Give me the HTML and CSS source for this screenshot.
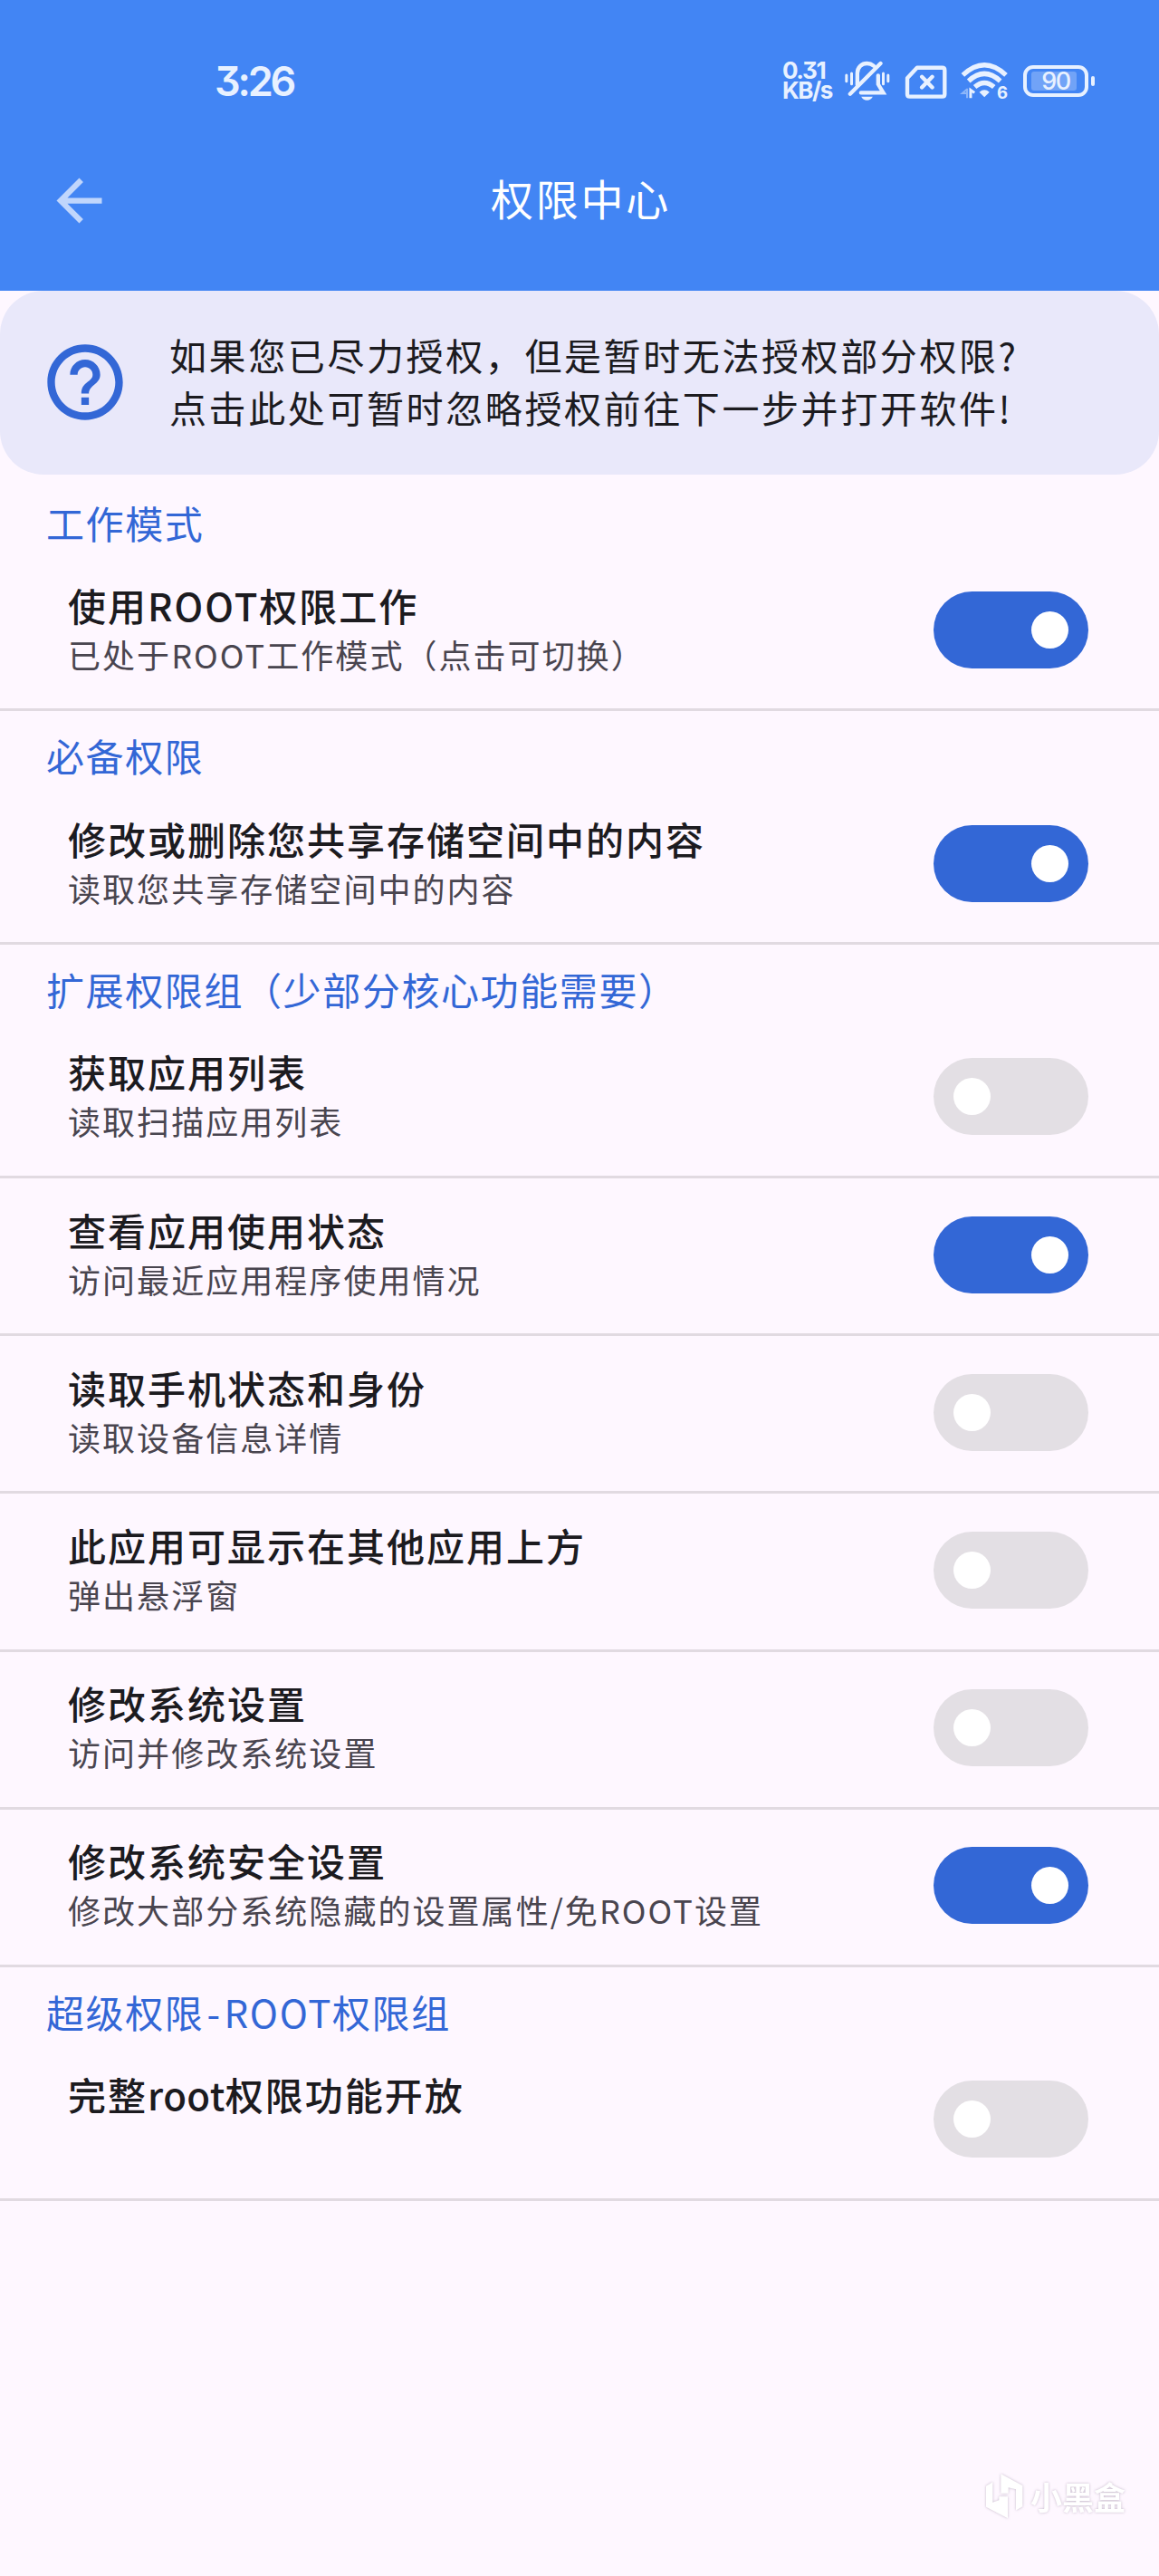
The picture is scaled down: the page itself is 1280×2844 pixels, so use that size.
FILE: index.html
```html
<!DOCTYPE html>
<html lang="zh-CN">
<head>
    <meta charset="UTF-8">
    <title>权限中心</title>
    <link rel="stylesheet" href="styles.css">
</head>
<body>
    <header class="header">
        <div class="status-bar">
            <span class="time">3:26</span>
            <div class="status-icons">
                <div class="speed"><span>0.31</span><span>KB/s</span></div>
                <!-- muted bell -->
                <svg class="icon-bell" viewBox="275 50 155 135" fill="none" stroke="currentColor" stroke-width="13" stroke-linecap="round">
                    <path d="M319 131V92C319 71 334 59 351 59C360 59 367 62 373 67M295 160L396 59M388 99V128L405 156H331"/>
                    <path d="M283 98V118M300 92V127M405 92V127M421 98V118" stroke-width="9"/>
                    <path d="M332 169H370C366 177 359 181 351 181S336 177 332 169Z" fill="currentColor" stroke="none"/>
                </svg>
                <!-- no sim -->
                <svg class="icon-sim" viewBox="478 65 140 110" fill="none" stroke="currentColor" stroke-width="13" stroke-linejoin="round">
                    <path d="M519 73H602Q610 73 610 81V160Q610 168 602 168H495Q487 168 487 160V107Z"/>
                    <path d="M535 103L569 138M569 103L535 138" stroke-linecap="round"/>
                </svg>
                <!-- wifi 6 -->
                <svg class="icon-wifi" viewBox="664 55 160 130" fill="none" stroke="currentColor" stroke-width="16">
                    <path d="M671 100Q743 33 815 100M690 120Q743 71 796 120M711 140Q743 112 775 140"/>
                    <path d="M743 174L726 157Q743 142 760 157Z" fill="currentColor" stroke="none"/>
                    <path d="M685 145V177M685 147L669 161H685" stroke-width="6" opacity=".45"/>
                    <path d="M697 177V150L710 159" stroke-width="9"/>
                    <text x="785" y="180" class="wifi-gen">6</text>
                </svg>
                <div class="battery"><span class="battery-level"></span><span class="battery-text">90</span></div>
            </div>
        </div>
        <div class="toolbar">
            <svg class="back" viewBox="0 0 24 24" fill="currentColor"><path d="M20 11H7.83l5.59-5.59L12 4l-8 8 8 8 1.41-1.41L7.83 13H20v-2z"/></svg>
            <h1>权限中心</h1>
        </div>
    </header>

    <div class="tip">
        <svg class="tip-icon" viewBox="0 0 24 24" fill="currentColor"><path d="M11 18h2v-2h-2v2zm1-16C6.48 2 2 6.48 2 12s4.48 10 10 10 10-4.48 10-10S17.52 2 12 2zm0 18c-4.41 0-8-3.59-8-8s3.59-8 8-8 8 3.59 8 8-3.59 8-8 8zm0-14c-2.21 0-4 1.79-4 4h2c0-1.1.9-2 2-2s2 .9 2 2c0 2-3 1.75-3 5h2c0-2.25 3-2.5 3-5 0-2.21-1.79-4-4-4z"/></svg>
        <p>如果您已尽力授权，但是暂时无法授权部分权限?<br>点击此处可暂时忽略授权前往下一步并打开软件!</p>
    </div>

    <main class="list">
        <h2>工作模式</h2>
        <div class="item">
            <div class="item-text">
                <h3>使用ROOT权限工作</h3>
                <p>已处于ROOT工作模式（点击可切换）</p>
            </div>
            <span class="switch on"></span>
        </div>

        <h2>必备权限</h2>
        <div class="item">
            <div class="item-text">
                <h3>修改或删除您共享存储空间中的内容</h3>
                <p>读取您共享存储空间中的内容</p>
            </div>
            <span class="switch on"></span>
        </div>

        <h2>扩展权限组（少部分核心功能需要）</h2>
        <div class="item">
            <div class="item-text">
                <h3>获取应用列表</h3>
                <p>读取扫描应用列表</p>
            </div>
            <span class="switch"></span>
        </div>
        <div class="item">
            <div class="item-text">
                <h3>查看应用使用状态</h3>
                <p>访问最近应用程序使用情况</p>
            </div>
            <span class="switch on"></span>
        </div>
        <div class="item">
            <div class="item-text">
                <h3>读取手机状态和身份</h3>
                <p>读取设备信息详情</p>
            </div>
            <span class="switch"></span>
        </div>
        <div class="item">
            <div class="item-text">
                <h3>此应用可显示在其他应用上方</h3>
                <p>弹出悬浮窗</p>
            </div>
            <span class="switch"></span>
        </div>
        <div class="item">
            <div class="item-text">
                <h3>修改系统设置</h3>
                <p>访问并修改系统设置</p>
            </div>
            <span class="switch"></span>
        </div>
        <div class="item">
            <div class="item-text">
                <h3>修改系统安全设置</h3>
                <p>修改大部分系统隐藏的设置属性/免ROOT设置</p>
            </div>
            <span class="switch on"></span>
        </div>

        <h2>超级权限<span class="dash">-</span>ROOT权限组</h2>
        <div class="item">
            <div class="item-text">
                <h3>完整<span class="latin">root</span>权限功能开放</h3>
                <p></p>
            </div>
            <span class="switch"></span>
        </div>
    </main>

    <div class="watermark">
        <svg viewBox="82 88 132 158" fill="currentColor">
            <path d="M88 135L110 121V189L131 181V169H160V241L88 204Z"/>
            <path d="M137 94L209 133V202L187 215V145L162 139V159H137Z"/>
        </svg>
        <span>小黑盒</span>
    </div>
</body>
</html>
```
FILE: styles.css
```css
* {
    box-sizing: border-box;
}
body {
    margin: 0;
    height: 2844px;
    position: relative;
    background: #fef7ff;
    color: #1c1b1f;
    font-family: "Noto Sans CJK SC", sans-serif;
}
h1, h2, h3, p {
    margin: 0;
    font-weight: 400;
}
svg {
    display: block;
    flex: none;
}

/* header */
.header {
    height: 321px;
    background: #4285f4;
    color: #fff;
}
.status-bar {
    height: 121px;
    padding: 57px 70px 0 237px;
    display: flex;
    justify-content: space-between;
    align-items: flex-start;
    color: #e8f1ff;
}
.time {
    font: 600 45px/66px Inter, sans-serif;
    font-feature-settings: "cv09";
    letter-spacing: -3.2px;
}
.status-icons {
    height: 64px;
    display: flex;
    align-items: center;
}
.speed {
    display: flex;
    flex-direction: column;
    width: 56px;
    margin-right: 12px;
    font: 700 26px/22px Inter, sans-serif;
    font-feature-settings: "cv09";
    letter-spacing: -1.4px;
    white-space: nowrap;
}
.icon-bell {
    width: 52px;
    height: 45px;
    margin-right: 15px;
}
.icon-sim {
    width: 47px;
    height: 37px;
    margin: 2px 15px 0 0;
}
.icon-wifi {
    width: 53px;
    height: 43px;
    margin-right: 16px;
    overflow: visible;
}
.wifi-gen {
    font: 700 56px Inter, sans-serif;
    fill: currentColor;
    stroke: none;
}
.battery {
    position: relative;
    width: 72px;
    height: 35px;
    margin-right: 8px;
    border: 4px solid currentColor;
    border-radius: 11px;
}
.battery::after {
    content: "";
    position: absolute;
    right: -11px;
    top: 8px;
    width: 4px;
    height: 11px;
    border-radius: 2px;
    background: currentColor;
}
.battery-level {
    position: absolute;
    left: 5px;
    top: 3px;
    width: 50px;
    height: 21px;
    border-radius: 3px;
    background: rgba(255, 255, 255, 0.25);
}
.battery-text {
    position: absolute;
    inset: 0;
    font: 500 27px/28px Inter, sans-serif;
    letter-spacing: -1.5px;
    text-align: center;
}
.toolbar {
    height: 200px;
    padding: 0 50px;
    display: grid;
    grid-template-columns: 75px 1fr 75px;
    align-items: center;
}
.back {
    width: 75px;
    height: 75px;
    color: #c0d6fc;
}
.toolbar h1 {
    padding: 0 0 6px 3px;
    font-size: 47px;
    line-height: 70px;
    letter-spacing: 2.7px;
    text-align: center;
}

/* tip card */
.tip {
    height: 203px;
    padding: 0 44px;
    display: flex;
    align-items: center;
    border-radius: 48px;
    background: #e9e8fa;
}
.tip-icon {
    width: 100px;
    height: 100px;
    margin: 0 43px 2px 0;
    color: #3367d6;
}
.tip p {
    padding-bottom: 6px;
    font-size: 41px;
    line-height: 58px;
    letter-spacing: 2.6px;
    white-space: nowrap;
}

/* permission list */
.list {
    padding-top: 3.6px;
}
.list h2 {
    height: 83.6px;
    padding-left: 51px;
    font-size: 42px;
    line-height: 97px;
    letter-spacing: 1.6px;
    color: #3367d6;
}
.dash {
    margin: 0 3px;
}
.item {
    height: 174.2px;
    padding: 0 78px 0 75px;
    display: flex;
    justify-content: space-between;
    align-items: center;
    border-bottom: 3.6px solid #e1dae1;
}
.item-text {
    padding-bottom: 6px;
}
.item h3 {
    font-size: 42px;
    line-height: 56px;
    letter-spacing: 2px;
    font-weight: 500;
}
.latin {
    letter-spacing: 0.4px;
}
.item p {
    height: 52px;
    font-size: 36px;
    line-height: 52px;
    letter-spacing: 2.05px;
    color: #49454f;
}
.switch {
    width: 171px;
    height: 85px;
    margin-bottom: 3px;
    padding: 22px;
    display: flex;
    border-radius: 43px;
    background: #e3dfe4;
}
.switch::before {
    content: "";
    width: 41px;
    height: 41px;
    border-radius: 50%;
    background: #fff;
}
.switch.on {
    justify-content: flex-end;
    background: #3367d6;
}

/* watermark over the page corner */
.watermark {
    position: absolute;
    right: 37px;
    bottom: 62px;
    display: flex;
    align-items: center;
    gap: 7px;
    color: #fff;
    filter: drop-shadow(0 0 1.5px rgba(90, 70, 100, 0.35));
}
.watermark svg {
    width: 44px;
    height: 53px;
}
.watermark span {
    font-size: 35px;
    line-height: 53px;
    font-weight: 700;
}
```
